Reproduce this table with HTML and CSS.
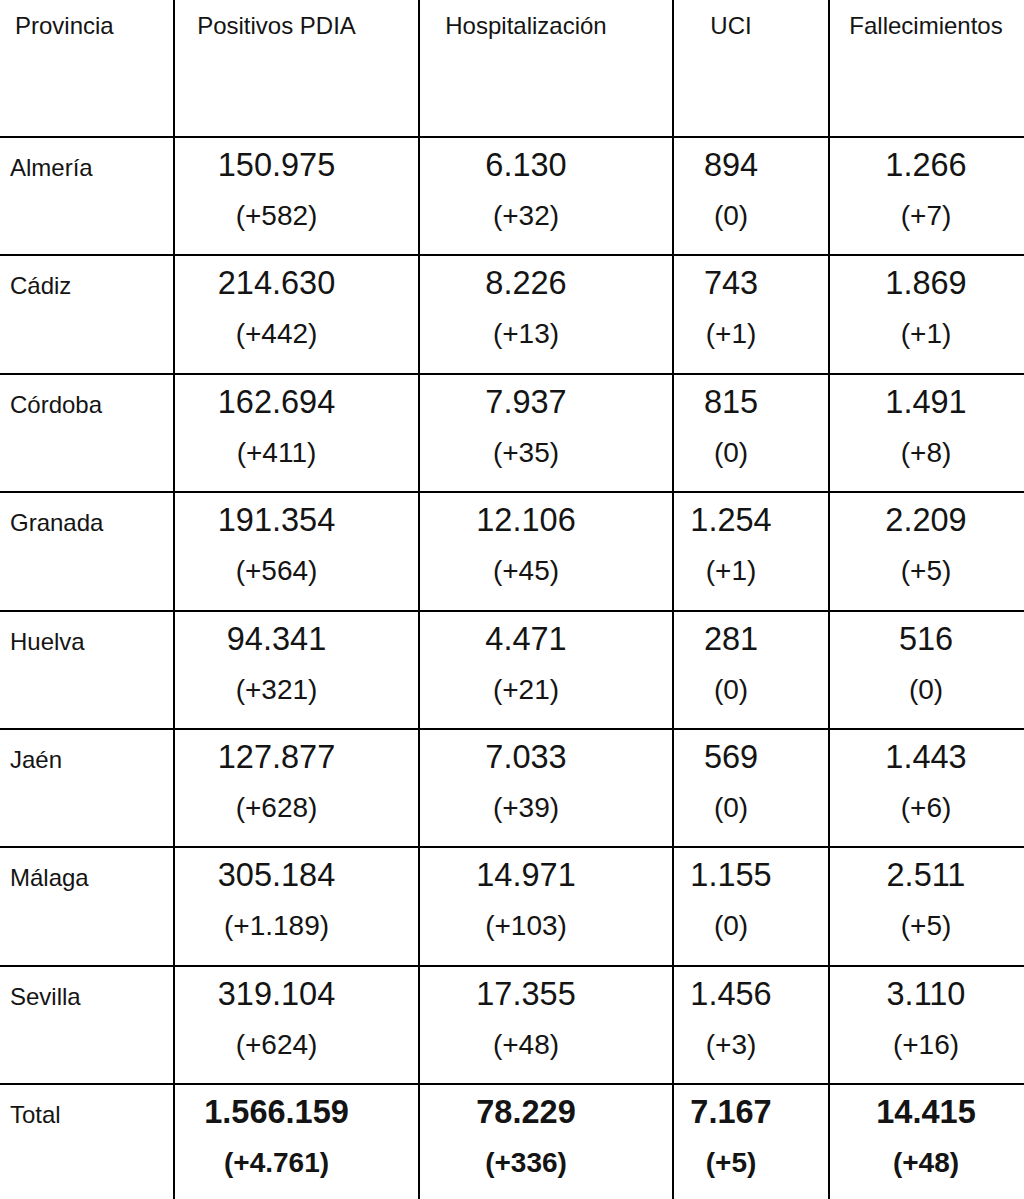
FILE: index.html
```html
<!DOCTYPE html>
<html lang="es">
<head>
<meta charset="utf-8">
<title>Datos COVID-19 por provincia</title>
<link rel="stylesheet" href="styles.css">
</head>
<body>
<table class="data">
  <colgroup>
    <col class="c-prov">
    <col class="c-pos">
    <col class="c-hosp">
    <col class="c-uci">
    <col class="c-fall">
  </colgroup>
  <thead>
    <tr class="head">
      <th class="prov">Provincia</th>
      <th>Positivos PDIA</th>
      <th>Hospitalización</th>
      <th>UCI</th>
      <th>Fallecimientos</th>
    </tr>
  </thead>
  <tbody>
    <tr>
      <td class="prov">Almería</td>
      <td><div class="num">150.975</div><div class="delta">(+582)</div></td>
      <td><div class="num">6.130</div><div class="delta">(+32)</div></td>
      <td><div class="num">894</div><div class="delta">(0)</div></td>
      <td><div class="num">1.266</div><div class="delta">(+7)</div></td>
    </tr>
    <tr>
      <td class="prov">Cádiz</td>
      <td><div class="num">214.630</div><div class="delta">(+442)</div></td>
      <td><div class="num">8.226</div><div class="delta">(+13)</div></td>
      <td><div class="num">743</div><div class="delta">(+1)</div></td>
      <td><div class="num">1.869</div><div class="delta">(+1)</div></td>
    </tr>
    <tr>
      <td class="prov">Córdoba</td>
      <td><div class="num">162.694</div><div class="delta">(+411)</div></td>
      <td><div class="num">7.937</div><div class="delta">(+35)</div></td>
      <td><div class="num">815</div><div class="delta">(0)</div></td>
      <td><div class="num">1.491</div><div class="delta">(+8)</div></td>
    </tr>
    <tr>
      <td class="prov">Granada</td>
      <td><div class="num">191.354</div><div class="delta">(+564)</div></td>
      <td><div class="num">12.106</div><div class="delta">(+45)</div></td>
      <td><div class="num">1.254</div><div class="delta">(+1)</div></td>
      <td><div class="num">2.209</div><div class="delta">(+5)</div></td>
    </tr>
    <tr>
      <td class="prov">Huelva</td>
      <td><div class="num">94.341</div><div class="delta">(+321)</div></td>
      <td><div class="num">4.471</div><div class="delta">(+21)</div></td>
      <td><div class="num">281</div><div class="delta">(0)</div></td>
      <td><div class="num">516</div><div class="delta">(0)</div></td>
    </tr>
    <tr>
      <td class="prov">Jaén</td>
      <td><div class="num">127.877</div><div class="delta">(+628)</div></td>
      <td><div class="num">7.033</div><div class="delta">(+39)</div></td>
      <td><div class="num">569</div><div class="delta">(0)</div></td>
      <td><div class="num">1.443</div><div class="delta">(+6)</div></td>
    </tr>
    <tr>
      <td class="prov">Málaga</td>
      <td><div class="num">305.184</div><div class="delta">(+1.189)</div></td>
      <td><div class="num">14.971</div><div class="delta">(+103)</div></td>
      <td><div class="num">1.155</div><div class="delta">(0)</div></td>
      <td><div class="num">2.511</div><div class="delta">(+5)</div></td>
    </tr>
    <tr>
      <td class="prov">Sevilla</td>
      <td><div class="num">319.104</div><div class="delta">(+624)</div></td>
      <td><div class="num">17.355</div><div class="delta">(+48)</div></td>
      <td><div class="num">1.456</div><div class="delta">(+3)</div></td>
      <td><div class="num">3.110</div><div class="delta">(+16)</div></td>
    </tr>
    <tr class="total">
      <td class="prov">Total</td>
      <td><div class="num">1.566.159</div><div class="delta">(+4.761)</div></td>
      <td><div class="num">78.229</div><div class="delta">(+336)</div></td>
      <td><div class="num">7.167</div><div class="delta">(+5)</div></td>
      <td><div class="num">14.415</div><div class="delta">(+48)</div></td>
    </tr>
  </tbody>
</table>
</body>
</html>
```

FILE: styles.css
```css
html, body {
  margin: 0;
  padding: 0;
  background: #ffffff;
  overflow: hidden;
}

body {
  font-family: "Liberation Sans", Arial, sans-serif;
  color: #141414;
}

.data {
  border-collapse: collapse;
  table-layout: fixed;
  width: 1062px;
}

.c-prov { width: 174px; }
.c-pos  { width: 245px; }
.c-hosp { width: 254px; }
.c-uci  { width: 156px; }
.c-fall { width: 233px; }

.data th,
.data td {
  border: 2px solid #000;
  padding: 9px 40px 0 0;
  text-align: center;
  vertical-align: baseline;
}

.data tr:first-child th { border-top: 0; }
.data th:first-child,
.data td:first-child { border-left: 0; }
.data th:last-child,
.data td:last-child { border-right: 0; }

.head {
  height: 137px;
}

.head th {
  font-weight: normal;
  font-size: 24px;
  line-height: 28px;
  padding-top: 12px;
  vertical-align: top;
}

.data tbody tr {
  height: 118.4px;
}

.data .prov {
  text-align: left;
  padding-left: 10px;
  padding-right: 0;
  font-size: 24px;
}

.head .prov {
  padding-left: 15px;
}

.num {
  font-size: 32.5px;
  line-height: 37px;
}

.delta {
  font-size: 28px;
  line-height: 32px;
  margin-top: 16px;
}

.total .num,
.total .delta {
  font-weight: bold;
}
```
